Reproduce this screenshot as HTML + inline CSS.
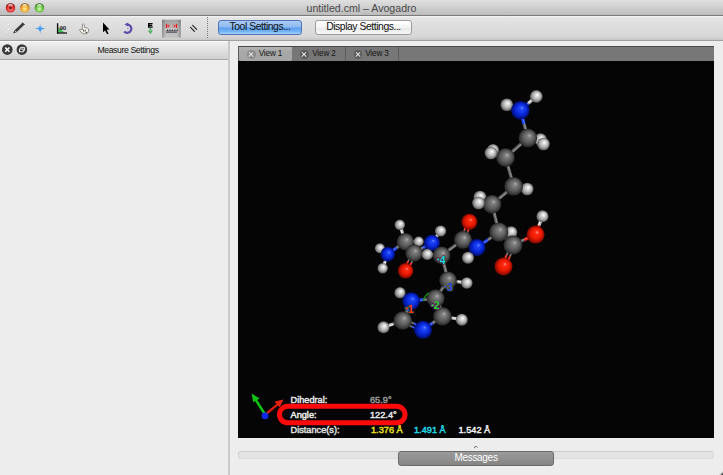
<!DOCTYPE html>
<html><head><meta charset="utf-8">
<style>
*{margin:0;padding:0;box-sizing:border-box}
html,body{width:723px;height:475px;overflow:hidden;background:#ededed;font-family:"Liberation Sans",sans-serif;position:relative}
.abs{position:absolute}
#title{left:0;top:0;width:723px;height:16px;background:linear-gradient(#e0e0e0,#bcbcbc);border-bottom:1px solid #7a7a7a}
#title .t{left:0;width:723px;top:2px;text-align:center;font-size:10.6px;color:#484848;line-height:12px}
.light{width:9.6px;height:9.6px;border-radius:50%;top:3px}
#toolbar{left:0;top:16px;width:723px;height:25px;background:linear-gradient(#f4f4f4 0px,#e4e4e4 2px,#d6d6d6 21px,#c6c6c6);border-bottom:1px solid #a0a0a0}
.btn{height:15px;border-radius:3px;font-size:10.4px;letter-spacing:-0.45px;line-height:12px;text-align:center;color:#111}
#b1{left:218px;top:20px;width:84px;background:linear-gradient(#a9cbf3 0%,#8dbaf0 46%,#5b9fee 54%,#74b2f4 80%,#a4d4fc 100%);border:1px solid #5474b8}
#b2{left:315px;top:20px;width:97px;background:linear-gradient(#ffffff,#f3f3f3 50%,#e9e9e9 51%,#f6f6f6);border:1px solid #9c9c9c}
#lhead{left:0;top:41px;width:228px;height:19px;background:linear-gradient(#f0f0f0,#d0d0d0);border-top:1px solid #fafafa;border-bottom:1px solid #a8a8a8}
#lhead .t{left:0;width:256px;top:3.3px;text-align:center;font-size:8.7px;letter-spacing:-0.4px;color:#111;line-height:10px}
#divider{left:228px;top:41px;width:2px;height:434px;background:#c9c9c9}
#tabbar{left:238px;top:46px;width:476px;height:15px;background:#777;border-top:1px solid #4a4a4a;border-left:1px solid #5a5a5a}
.tab{top:0;height:14px}
#tabbar .x{top:3.3px;width:8.6px;height:8.6px;border-radius:50%}
#tabbar .x:before,#tabbar .x:after{content:"";position:absolute;left:1.3px;top:3.6px;width:6px;height:1.4px;background:#e4e4e4;transform:rotate(45deg)}
#tabbar .x:after{transform:rotate(-45deg)}
#tabbar .tt{top:2px;font-size:8.2px;letter-spacing:-0.15px;line-height:10px;color:#151515}
#view{left:238px;top:61px;width:476px;height:377px;background:#050505;overflow:hidden}
#bbar{left:238px;top:451px;width:476px;height:8px;background:#e4e4e4;border:1px solid #dadada;border-top-color:#cecece;border-left-color:#d0d0d0;border-radius:3px}
#msg{left:398px;top:451px;width:156px;height:15px;border-radius:3px;background:linear-gradient(#9a9a9a,#858585);border:1px solid #6a6a6a;color:#fff;font-size:10px;letter-spacing:-0.3px;text-align:center;line-height:12px}
</style></head><body>
<div id="title" class="abs">
  <div class="abs t">untitled.cml – Avogadro</div>
  <svg class="abs" style="left:0;top:0" width="50" height="16"><defs><radialGradient id="lr" cx="0.5" cy="0.62" r="0.55"><stop offset="0" stop-color="#ff9a9a"/><stop offset="0.45" stop-color="#f04a4a"/><stop offset="0.85" stop-color="#c82020"/><stop offset="1" stop-color="#7a1010"/></radialGradient><radialGradient id="ly" cx="0.5" cy="0.62" r="0.55"><stop offset="0" stop-color="#ffe8a0"/><stop offset="0.45" stop-color="#f8c048"/><stop offset="0.85" stop-color="#d89020"/><stop offset="1" stop-color="#805010"/></radialGradient><radialGradient id="lg" cx="0.5" cy="0.62" r="0.55"><stop offset="0" stop-color="#d8f8b8"/><stop offset="0.45" stop-color="#8ad860"/><stop offset="0.85" stop-color="#50a830"/><stop offset="1" stop-color="#2a6a18"/></radialGradient><linearGradient id="lhi" x1="0" y1="0" x2="0" y2="1"><stop offset="0" stop-color="#fff" stop-opacity="0.9"/><stop offset="1" stop-color="#fff" stop-opacity="0"/></linearGradient></defs><circle cx="10.5" cy="7.9" r="4.7" fill="url(#lr)"/><ellipse cx="10.5" cy="5.6" rx="2.6" ry="1.7" fill="url(#lhi)"/><circle cx="24.8" cy="7.9" r="4.7" fill="url(#ly)"/><ellipse cx="24.8" cy="5.6" rx="2.6" ry="1.7" fill="url(#lhi)"/><circle cx="39.4" cy="7.9" r="4.7" fill="url(#lg)"/><ellipse cx="39.4" cy="5.6" rx="2.6" ry="1.7" fill="url(#lhi)"/><circle cx="10.5" cy="8" r="1.4" fill="#6a0000" opacity="0.85"/></svg>
</div>
<div id="toolbar" class="abs"></div>
<svg width="723" height="60" viewBox="0 0 723 60" style="position:absolute;left:0;top:0;z-index:5"><defs><linearGradient id="press" x1="0" y1="0" x2="0" y2="1"><stop offset="0" stop-color="#a9a9a9"/><stop offset="0.5" stop-color="#c4c4c4"/><stop offset="1" stop-color="#cdcdcd"/></linearGradient><linearGradient id="star" x1="0" y1="0" x2="0" y2="1"><stop offset="0" stop-color="#7cc4ff"/><stop offset="1" stop-color="#1a7ae8"/></linearGradient></defs><circle cx="6.5" cy="22.2" r="0.85" fill="#c0c0c0"/><circle cx="6.2" cy="21.8" r="0.8" fill="#ffffff"/><circle cx="8.7" cy="24.8" r="0.85" fill="#c0c0c0"/><circle cx="8.4" cy="24.4" r="0.8" fill="#ffffff"/><circle cx="6.5" cy="27.4" r="0.85" fill="#c0c0c0"/><circle cx="6.2" cy="27.0" r="0.8" fill="#ffffff"/><circle cx="8.7" cy="30.0" r="0.85" fill="#c0c0c0"/><circle cx="8.4" cy="29.6" r="0.8" fill="#ffffff"/><circle cx="6.5" cy="32.6" r="0.85" fill="#c0c0c0"/><circle cx="6.2" cy="32.2" r="0.8" fill="#ffffff"/><line x1="15.6" y1="31.2" x2="23.4" y2="23.8" stroke="#3a3a3a" stroke-width="2.7" stroke-linecap="butt"/><line x1="22.2" y1="22.6" x2="24.6" y2="25" stroke="#222" stroke-width="1"/><polygon points="13,33.6 14.6,30 16.8,32.2" fill="#404040"/><line x1="14.9" y1="30.7" x2="16.6" y2="32.4" stroke="#e0e0e0" stroke-width="0.9"/><path d="M40.2 22.8 C40.4 26.6 40.8 27.9 45.9 28.5 C40.8 29.1 40.4 30.4 40.2 34.2 C40 30.4 39.6 29.1 34.5 28.5 C39.6 27.9 40 26.6 40.2 22.8Z" fill="url(#star)"/><polygon points="58.3,27.3 58.3,32.4 64.5,32.4" fill="#3cc050"/><line x1="57.6" y1="23.2" x2="57.6" y2="33.6" stroke="#111" stroke-width="1.4"/><line x1="57" y1="33" x2="67" y2="33" stroke="#111" stroke-width="1.3"/><text x="59.6" y="30.4" font-size="6.2" font-weight="bold" fill="#222" font-family="Liberation Sans" letter-spacing="-0.3">90</text><path d="M82.4 24.4 Q83.3 23.2 84.2 24.4 L84.6 27.6 Q87.6 27.4 88.6 29 Q89 31.6 87.6 33.2 Q85.6 34.2 83 33.6 Q81 32.6 79.8 30.6 Q79.4 29.4 80.6 29.2 L82.4 29.8 Z" fill="#f2f2ea" stroke="#6a6a60" stroke-width="0.7"/><line x1="83.6" y1="29.6" x2="83.6" y2="31.6" stroke="#333" stroke-width="0.8"/><line x1="85.2" y1="29.6" x2="85.2" y2="31.6" stroke="#333" stroke-width="0.8"/><circle cx="86.3" cy="32.4" r="0.6" fill="#111"/><path d="M103 22.6 L103 32.2 L105 30.4 L107.2 34.3 L108.6 33.5 L106.6 29.8 L109.4 29.4 Z" fill="#000"/><path d="M126.8 24.6 A4.1 4.1 0 1 1 124.2 31.4" fill="none" stroke="#5d4aab" stroke-width="2.2"/><polygon points="124.4,24.2 128.4,22.4 127.8,26.6" fill="#5d4aab"/><circle cx="127.9" cy="28.4" r="0.75" fill="#9080d0"/><path d="M148 23 H152.6 V24.2 H149.4 V24.8 H152.2 V25.9 H149.4 V26.5 H152.7 V27.7 H148 Z" fill="#000"/><rect x="149.5" y="28.4" width="1.8" height="2.4" fill="#3aa855"/><polygon points="147.9,30.4 152.9,30.4 150.4,34" fill="#3aa855"/><circle cx="150.4" cy="30.8" r="0.7" fill="#a0e8b0"/><defs><linearGradient id="pressh" x1="0" y1="0" x2="1" y2="0"><stop offset="0" stop-color="#000" stop-opacity="0.28"/><stop offset="0.2" stop-color="#000" stop-opacity="0.05"/><stop offset="0.8" stop-color="#000" stop-opacity="0.05"/><stop offset="1" stop-color="#000" stop-opacity="0.28"/></linearGradient></defs><rect x="162" y="19.7" width="18.8" height="18" fill="url(#press)"/><rect x="162" y="19.7" width="18.8" height="18" fill="url(#pressh)"/><rect x="165.9" y="23.9" width="1.2" height="4.3" fill="#ee1c1c"/><rect x="175.9" y="23.9" width="1.2" height="4.3" fill="#ee1c1c"/><polygon points="167,26 169.2,24.3 169.2,27.7" fill="#ee3030"/><polygon points="175.9,26 173.7,24.3 173.7,27.7" fill="#ee3030"/><line x1="169.2" y1="26" x2="173.7" y2="26" stroke="#f09090" stroke-width="0.9" stroke-dasharray="1,0.8"/><rect x="166" y="29.4" width="11" height="3.6" fill="#8a8a8e"/><rect x="166" y="31.9" width="11" height="1.1" fill="#6c6c74"/><rect x="166.0" y="28.6" width="1.1" height="1.3" fill="#f4f4f4"/><rect x="167.1" y="29.5" width="1.0" height="1.6" fill="#3a3a3a"/><rect x="168.4" y="28.6" width="1.1" height="1.3" fill="#f4f4f4"/><rect x="169.5" y="29.5" width="1.0" height="1.6" fill="#3a3a3a"/><rect x="170.8" y="28.6" width="1.1" height="1.3" fill="#f4f4f4"/><rect x="171.9" y="29.5" width="1.0" height="1.6" fill="#3a3a3a"/><rect x="173.2" y="28.6" width="1.1" height="1.3" fill="#f4f4f4"/><rect x="174.3" y="29.5" width="1.0" height="1.6" fill="#3a3a3a"/><rect x="175.6" y="28.6" width="1.1" height="1.3" fill="#f4f4f4"/><rect x="176.7" y="29.5" width="1.0" height="1.6" fill="#3a3a3a"/><line x1="190.6" y1="27.4" x2="194.4" y2="31.4" stroke="#2a2a2a" stroke-width="1.2" stroke-linecap="round"/><line x1="192.7" y1="25.3" x2="196.6" y2="29.3" stroke="#2a2a2a" stroke-width="1.2" stroke-linecap="round"/><rect x="207" y="17.0" width="1" height="1" fill="#7a7a7a"/><rect x="207" y="19.0" width="1" height="1" fill="#7a7a7a"/><rect x="207" y="21.0" width="1" height="1" fill="#7a7a7a"/><rect x="207" y="23.0" width="1" height="1" fill="#7a7a7a"/><rect x="207" y="25.0" width="1" height="1" fill="#7a7a7a"/><rect x="207" y="27.0" width="1" height="1" fill="#7a7a7a"/><rect x="207" y="29.0" width="1" height="1" fill="#7a7a7a"/><rect x="207" y="31.0" width="1" height="1" fill="#7a7a7a"/><rect x="207" y="33.0" width="1" height="1" fill="#7a7a7a"/><rect x="207" y="35.0" width="1" height="1" fill="#7a7a7a"/><rect x="207" y="37.0" width="1" height="1" fill="#7a7a7a"/><circle cx="7.3" cy="49.6" r="5.3" fill="#3a3a3a"/><path d="M5.2 47.5 L9.4 51.7 M9.4 47.5 L5.2 51.7" stroke="#fff" stroke-width="1.6"/><circle cx="21.9" cy="49.6" r="5.3" fill="#3a3a3a"/><rect x="19.4" y="49" width="3.8" height="2.8" fill="none" stroke="#fff" stroke-width="0.9"/><path d="M20.6 48.4 V47.4 H24.6 V50.4 H23.6" fill="none" stroke="#fff" stroke-width="0.9"/></svg>
<div id="b1" class="abs btn">Tool Settings...</div>
<div id="b2" class="abs btn">Display Settings...</div>
<div id="lhead" class="abs"><div class="abs t">Measure Settings</div></div>
<div id="divider" class="abs"></div>
<div id="tabbar" class="abs">
  <div class="abs tab" style="left:0;width:52.5px;background:linear-gradient(#b4b4b4,#a8a8a8 30%,#a6a6a6);border-radius:0 0 2px 2px;height:14px"></div>
  <div class="abs" style="left:106px;top:0;width:1px;height:14px;background:#5e5e5e"></div>
  <div class="abs" style="left:159px;top:0;width:1px;height:14px;background:#5e5e5e"></div>
  <div class="abs x" style="left:8.2px;background:#8c8c8c"></div><div class="abs tt" style="left:19.7px">View 1</div>
  <div class="abs x" style="left:61.2px;background:#5c5c5c"></div><div class="abs tt" style="left:73.2px">View 2</div>
  <div class="abs x" style="left:114.7px;background:#5c5c5c"></div><div class="abs tt" style="left:126.2px">View 3</div>
</div>
<div id="view" class="abs"><svg width="476" height="377" viewBox="238 61 476 377" style="position:absolute;left:0;top:0"><defs><radialGradient id="gC" cx="0.5" cy="0.5" r="0.5" fx="0.6" fy="0.36"><stop offset="0" stop-color="#b0b0b0"/><stop offset="0.22" stop-color="#7e7e7e"/><stop offset="0.65" stop-color="#575757"/><stop offset="1" stop-color="#262626"/></radialGradient><radialGradient id="gN" cx="0.5" cy="0.5" r="0.5" fx="0.6" fy="0.36"><stop offset="0" stop-color="#7890ff"/><stop offset="0.18" stop-color="#2048ff"/><stop offset="0.6" stop-color="#0828d8"/><stop offset="1" stop-color="#000c70"/></radialGradient><radialGradient id="gO" cx="0.5" cy="0.5" r="0.5" fx="0.6" fy="0.36"><stop offset="0" stop-color="#ffa090"/><stop offset="0.2" stop-color="#ff2a14"/><stop offset="0.62" stop-color="#e81800"/><stop offset="1" stop-color="#780800"/></radialGradient><radialGradient id="gH" cx="0.5" cy="0.5" r="0.5" fx="0.6" fy="0.36"><stop offset="0" stop-color="#ffffff"/><stop offset="0.22" stop-color="#e4e4e4"/><stop offset="0.62" stop-color="#b0b0b0"/><stop offset="1" stop-color="#5a5a5a"/></radialGradient></defs><line x1="520.4" y1="110.3" x2="528.3" y2="103.3" stroke="#1a40f0" stroke-width="3.2"/><line x1="528.3" y1="103.3" x2="536.3" y2="96.4" stroke="#b8b8b8" stroke-width="3.2"/><line x1="520.1" y1="110.0" x2="528.1" y2="103.1" stroke="#5070ff" stroke-width="1.12"/><line x1="528.1" y1="103.1" x2="536.0" y2="96.1" stroke="#eeeeee" stroke-width="1.12"/><line x1="520.4" y1="110.3" x2="513.6" y2="107.5" stroke="#1a40f0" stroke-width="3.2"/><line x1="513.6" y1="107.5" x2="506.8" y2="104.8" stroke="#b8b8b8" stroke-width="3.2"/><line x1="520.3" y1="110.7" x2="513.5" y2="107.9" stroke="#5070ff" stroke-width="1.12"/><line x1="513.5" y1="107.9" x2="506.7" y2="105.2" stroke="#eeeeee" stroke-width="1.12"/><line x1="505.5" y1="157.5" x2="499.2" y2="153.8" stroke="#606060" stroke-width="3.2"/><line x1="499.2" y1="153.8" x2="493.0" y2="150.0" stroke="#b8b8b8" stroke-width="3.2"/><line x1="505.3" y1="157.8" x2="499.1" y2="154.1" stroke="#8e8e8e" stroke-width="1.12"/><line x1="499.1" y1="154.1" x2="492.8" y2="150.3" stroke="#eeeeee" stroke-width="1.12"/><line x1="405.4" y1="241.7" x2="402.6" y2="233.2" stroke="#606060" stroke-width="3.2"/><line x1="402.6" y1="233.2" x2="399.8" y2="224.8" stroke="#b8b8b8" stroke-width="3.2"/><line x1="405.0" y1="241.8" x2="402.2" y2="233.4" stroke="#8e8e8e" stroke-width="1.12"/><line x1="402.2" y1="233.4" x2="399.4" y2="224.9" stroke="#eeeeee" stroke-width="1.12"/><circle cx="536.3" cy="96.4" r="6.3" fill="url(#gH)"/><circle cx="506.8" cy="104.8" r="6.3" fill="url(#gH)"/><circle cx="493" cy="150" r="6" fill="url(#gH)"/><circle cx="399.8" cy="224.8" r="5.2" fill="url(#gH)"/><line x1="527.9" y1="137.9" x2="534.2" y2="138.7" stroke="#606060" stroke-width="3.2"/><line x1="534.2" y1="138.7" x2="540.5" y2="139.5" stroke="#b8b8b8" stroke-width="3.2"/><line x1="527.9" y1="137.5" x2="534.2" y2="138.3" stroke="#8e8e8e" stroke-width="1.12"/><line x1="534.2" y1="138.3" x2="540.5" y2="139.1" stroke="#eeeeee" stroke-width="1.12"/><line x1="505.5" y1="157.5" x2="498.2" y2="155.2" stroke="#606060" stroke-width="3.2"/><line x1="498.2" y1="155.2" x2="491.0" y2="153.0" stroke="#b8b8b8" stroke-width="3.2"/><line x1="505.4" y1="157.9" x2="498.1" y2="155.6" stroke="#8e8e8e" stroke-width="1.12"/><line x1="498.1" y1="155.6" x2="490.9" y2="153.4" stroke="#eeeeee" stroke-width="1.12"/><line x1="513.7" y1="186.3" x2="520.5" y2="187.7" stroke="#606060" stroke-width="3.2"/><line x1="520.5" y1="187.7" x2="527.2" y2="189.0" stroke="#b8b8b8" stroke-width="3.2"/><line x1="513.8" y1="185.9" x2="520.5" y2="187.3" stroke="#8e8e8e" stroke-width="1.12"/><line x1="520.5" y1="187.3" x2="527.3" y2="188.6" stroke="#eeeeee" stroke-width="1.12"/><line x1="492.0" y1="204.2" x2="486.0" y2="200.6" stroke="#606060" stroke-width="3.2"/><line x1="486.0" y1="200.6" x2="480.0" y2="197.0" stroke="#b8b8b8" stroke-width="3.2"/><line x1="491.8" y1="204.5" x2="485.8" y2="200.9" stroke="#8e8e8e" stroke-width="1.12"/><line x1="485.8" y1="200.9" x2="479.8" y2="197.3" stroke="#eeeeee" stroke-width="1.12"/><line x1="498.8" y1="232.0" x2="505.1" y2="232.1" stroke="#606060" stroke-width="3.2"/><line x1="505.1" y1="232.1" x2="511.3" y2="232.2" stroke="#b8b8b8" stroke-width="3.2"/><line x1="498.8" y1="231.6" x2="505.1" y2="231.7" stroke="#8e8e8e" stroke-width="1.12"/><line x1="505.1" y1="231.7" x2="511.3" y2="231.8" stroke="#eeeeee" stroke-width="1.12"/><line x1="461.3" y1="239.2" x2="464.5" y2="230.2" stroke="#606060" stroke-width="2.0"/><line x1="464.5" y1="230.2" x2="467.7" y2="221.2" stroke="#e82010" stroke-width="2.0"/><line x1="461.1" y1="239.1" x2="464.3" y2="230.1" stroke="#8e8e8e" stroke-width="0.70"/><line x1="464.3" y1="230.1" x2="467.5" y2="221.1" stroke="#ff6050" stroke-width="0.70"/><line x1="464.7" y1="240.4" x2="467.9" y2="231.4" stroke="#606060" stroke-width="2.0"/><line x1="467.9" y1="231.4" x2="471.1" y2="222.4" stroke="#e82010" stroke-width="2.0"/><line x1="464.5" y1="240.3" x2="467.7" y2="231.3" stroke="#8e8e8e" stroke-width="0.70"/><line x1="467.7" y1="231.3" x2="470.9" y2="222.3" stroke="#ff6050" stroke-width="0.70"/><line x1="431.9" y1="242.8" x2="436.2" y2="236.9" stroke="#1a40f0" stroke-width="3.2"/><line x1="436.2" y1="236.9" x2="440.6" y2="231.0" stroke="#b8b8b8" stroke-width="3.2"/><line x1="431.6" y1="242.6" x2="435.9" y2="236.7" stroke="#5070ff" stroke-width="1.12"/><line x1="435.9" y1="236.7" x2="440.3" y2="230.8" stroke="#eeeeee" stroke-width="1.12"/><line x1="387.8" y1="254.2" x2="396.6" y2="247.9" stroke="#1a40f0" stroke-width="3.2"/><line x1="396.6" y1="247.9" x2="405.4" y2="241.7" stroke="#606060" stroke-width="3.2"/><line x1="387.6" y1="253.9" x2="396.4" y2="247.6" stroke="#5070ff" stroke-width="1.12"/><line x1="396.4" y1="247.6" x2="405.2" y2="241.4" stroke="#8e8e8e" stroke-width="1.12"/><line x1="387.8" y1="254.2" x2="383.9" y2="251.2" stroke="#1a40f0" stroke-width="3.2"/><line x1="383.9" y1="251.2" x2="379.9" y2="248.3" stroke="#b8b8b8" stroke-width="3.2"/><line x1="387.6" y1="254.5" x2="383.6" y2="251.6" stroke="#5070ff" stroke-width="1.12"/><line x1="383.6" y1="251.6" x2="379.7" y2="248.6" stroke="#eeeeee" stroke-width="1.12"/><line x1="387.8" y1="254.2" x2="385.2" y2="261.2" stroke="#1a40f0" stroke-width="3.2"/><line x1="385.2" y1="261.2" x2="382.7" y2="268.2" stroke="#b8b8b8" stroke-width="3.2"/><line x1="388.2" y1="254.3" x2="385.6" y2="261.3" stroke="#5070ff" stroke-width="1.12"/><line x1="385.6" y1="261.3" x2="383.1" y2="268.3" stroke="#eeeeee" stroke-width="1.12"/><line x1="405.4" y1="241.7" x2="412.0" y2="241.6" stroke="#606060" stroke-width="3.2"/><line x1="412.0" y1="241.6" x2="418.7" y2="241.5" stroke="#b8b8b8" stroke-width="3.2"/><line x1="405.4" y1="241.3" x2="412.0" y2="241.2" stroke="#8e8e8e" stroke-width="1.12"/><line x1="412.0" y1="241.2" x2="418.7" y2="241.1" stroke="#eeeeee" stroke-width="1.12"/><line x1="405.4" y1="241.7" x2="409.7" y2="247.3" stroke="#606060" stroke-width="3.2"/><line x1="409.7" y1="247.3" x2="414.0" y2="253.0" stroke="#606060" stroke-width="3.2"/><line x1="405.7" y1="241.5" x2="410.0" y2="247.1" stroke="#8e8e8e" stroke-width="1.12"/><line x1="410.0" y1="247.1" x2="414.3" y2="252.8" stroke="#8e8e8e" stroke-width="1.12"/><circle cx="540.5" cy="139.5" r="6.3" fill="url(#gH)"/><circle cx="491" cy="153" r="6.3" fill="url(#gH)"/><circle cx="527.2" cy="189" r="6.3" fill="url(#gH)"/><circle cx="480" cy="197" r="6.3" fill="url(#gH)"/><circle cx="511.3" cy="232.2" r="6" fill="url(#gH)"/><circle cx="469.4" cy="221.8" r="8" fill="url(#gO)"/><circle cx="440.6" cy="231" r="5.6" fill="url(#gH)"/><circle cx="405.4" cy="241.7" r="8.6" fill="url(#gC)"/><circle cx="379.9" cy="248.3" r="5" fill="url(#gH)"/><circle cx="382.7" cy="268.2" r="5.2" fill="url(#gH)"/><line x1="520.4" y1="110.3" x2="524.1" y2="124.1" stroke="#1a40f0" stroke-width="3.2"/><line x1="524.1" y1="124.1" x2="527.9" y2="137.9" stroke="#606060" stroke-width="3.2"/><line x1="520.8" y1="110.2" x2="524.5" y2="124.0" stroke="#5070ff" stroke-width="1.12"/><line x1="524.5" y1="124.0" x2="528.3" y2="137.8" stroke="#8e8e8e" stroke-width="1.12"/><line x1="527.9" y1="137.9" x2="535.7" y2="140.9" stroke="#606060" stroke-width="3.2"/><line x1="535.7" y1="140.9" x2="543.5" y2="144.0" stroke="#b8b8b8" stroke-width="3.2"/><line x1="528.0" y1="137.5" x2="535.8" y2="140.6" stroke="#8e8e8e" stroke-width="1.12"/><line x1="535.8" y1="140.6" x2="543.6" y2="143.6" stroke="#eeeeee" stroke-width="1.12"/><line x1="527.9" y1="137.9" x2="516.7" y2="147.7" stroke="#606060" stroke-width="3.2"/><line x1="516.7" y1="147.7" x2="505.5" y2="157.5" stroke="#606060" stroke-width="3.2"/><line x1="528.2" y1="138.2" x2="517.0" y2="148.0" stroke="#8e8e8e" stroke-width="1.12"/><line x1="517.0" y1="148.0" x2="505.8" y2="157.8" stroke="#8e8e8e" stroke-width="1.12"/><line x1="505.5" y1="157.5" x2="509.6" y2="171.9" stroke="#606060" stroke-width="3.2"/><line x1="509.6" y1="171.9" x2="513.7" y2="186.3" stroke="#606060" stroke-width="3.2"/><line x1="505.9" y1="157.4" x2="510.0" y2="171.8" stroke="#8e8e8e" stroke-width="1.12"/><line x1="510.0" y1="171.8" x2="514.1" y2="186.2" stroke="#8e8e8e" stroke-width="1.12"/><line x1="513.7" y1="186.3" x2="502.9" y2="195.2" stroke="#606060" stroke-width="3.2"/><line x1="502.9" y1="195.2" x2="492.0" y2="204.2" stroke="#606060" stroke-width="3.2"/><line x1="513.9" y1="186.6" x2="503.1" y2="195.5" stroke="#8e8e8e" stroke-width="1.12"/><line x1="503.1" y1="195.5" x2="492.2" y2="204.5" stroke="#8e8e8e" stroke-width="1.12"/><line x1="492.0" y1="204.2" x2="485.2" y2="203.6" stroke="#606060" stroke-width="3.2"/><line x1="485.2" y1="203.6" x2="478.5" y2="203.0" stroke="#b8b8b8" stroke-width="3.2"/><line x1="492.0" y1="204.6" x2="485.2" y2="204.0" stroke="#8e8e8e" stroke-width="1.12"/><line x1="485.2" y1="204.0" x2="478.5" y2="203.4" stroke="#eeeeee" stroke-width="1.12"/><line x1="492.0" y1="204.2" x2="495.4" y2="218.1" stroke="#606060" stroke-width="3.2"/><line x1="495.4" y1="218.1" x2="498.8" y2="232.0" stroke="#606060" stroke-width="3.2"/><line x1="492.4" y1="204.1" x2="495.8" y2="218.0" stroke="#8e8e8e" stroke-width="1.12"/><line x1="495.8" y1="218.0" x2="499.2" y2="231.9" stroke="#8e8e8e" stroke-width="1.12"/><line x1="498.8" y1="232.0" x2="505.9" y2="238.5" stroke="#606060" stroke-width="3.2"/><line x1="505.9" y1="238.5" x2="513.0" y2="245.0" stroke="#606060" stroke-width="3.2"/><line x1="499.1" y1="231.7" x2="506.2" y2="238.2" stroke="#8e8e8e" stroke-width="1.12"/><line x1="506.2" y1="238.2" x2="513.3" y2="244.7" stroke="#8e8e8e" stroke-width="1.12"/><line x1="535.6" y1="234.6" x2="539.0" y2="225.4" stroke="#e82010" stroke-width="3.2"/><line x1="539.0" y1="225.4" x2="542.5" y2="216.2" stroke="#b8b8b8" stroke-width="3.2"/><line x1="535.2" y1="234.5" x2="538.7" y2="225.3" stroke="#ff6050" stroke-width="1.12"/><line x1="538.7" y1="225.3" x2="542.1" y2="216.1" stroke="#eeeeee" stroke-width="1.12"/><line x1="498.8" y1="232.0" x2="487.9" y2="239.7" stroke="#606060" stroke-width="3.2"/><line x1="487.9" y1="239.7" x2="477.0" y2="247.4" stroke="#1a40f0" stroke-width="3.2"/><line x1="499.0" y1="232.3" x2="488.1" y2="240.0" stroke="#8e8e8e" stroke-width="1.12"/><line x1="488.1" y1="240.0" x2="477.2" y2="247.7" stroke="#5070ff" stroke-width="1.12"/><line x1="477.0" y1="247.4" x2="470.0" y2="243.6" stroke="#1a40f0" stroke-width="3.2"/><line x1="470.0" y1="243.6" x2="463.0" y2="239.8" stroke="#606060" stroke-width="3.2"/><line x1="476.8" y1="247.7" x2="469.8" y2="243.9" stroke="#5070ff" stroke-width="1.12"/><line x1="469.8" y1="243.9" x2="462.8" y2="240.1" stroke="#8e8e8e" stroke-width="1.12"/><line x1="463.0" y1="239.8" x2="452.3" y2="247.5" stroke="#606060" stroke-width="3.2"/><line x1="452.3" y1="247.5" x2="441.6" y2="255.2" stroke="#606060" stroke-width="3.2"/><line x1="463.2" y1="240.1" x2="452.5" y2="247.8" stroke="#8e8e8e" stroke-width="1.12"/><line x1="452.5" y1="247.8" x2="441.8" y2="255.5" stroke="#8e8e8e" stroke-width="1.12"/><line x1="441.6" y1="255.2" x2="436.8" y2="249.0" stroke="#606060" stroke-width="3.2"/><line x1="436.8" y1="249.0" x2="431.9" y2="242.8" stroke="#1a40f0" stroke-width="3.2"/><line x1="441.3" y1="255.4" x2="436.4" y2="249.2" stroke="#8e8e8e" stroke-width="1.12"/><line x1="436.4" y1="249.2" x2="431.6" y2="243.0" stroke="#5070ff" stroke-width="1.12"/><line x1="448.0" y1="280.2" x2="457.4" y2="281.6" stroke="#606060" stroke-width="3.2"/><line x1="457.4" y1="281.6" x2="466.8" y2="283.0" stroke="#b8b8b8" stroke-width="3.2"/><line x1="448.1" y1="279.8" x2="457.5" y2="281.2" stroke="#8e8e8e" stroke-width="1.12"/><line x1="457.5" y1="281.2" x2="466.9" y2="282.6" stroke="#eeeeee" stroke-width="1.12"/><line x1="411.2" y1="301.0" x2="405.6" y2="296.9" stroke="#1a40f0" stroke-width="3.2"/><line x1="405.6" y1="296.9" x2="400.0" y2="292.7" stroke="#b8b8b8" stroke-width="3.2"/><line x1="411.0" y1="301.3" x2="405.4" y2="297.2" stroke="#5070ff" stroke-width="1.12"/><line x1="405.4" y1="297.2" x2="399.8" y2="293.0" stroke="#eeeeee" stroke-width="1.12"/><line x1="442.4" y1="316.3" x2="452.1" y2="318.0" stroke="#606060" stroke-width="3.2"/><line x1="452.1" y1="318.0" x2="461.8" y2="319.7" stroke="#b8b8b8" stroke-width="3.2"/><line x1="442.5" y1="315.9" x2="452.2" y2="317.6" stroke="#8e8e8e" stroke-width="1.12"/><line x1="452.2" y1="317.6" x2="461.9" y2="319.3" stroke="#eeeeee" stroke-width="1.12"/><line x1="402.8" y1="320.5" x2="393.1" y2="323.9" stroke="#606060" stroke-width="3.2"/><line x1="393.1" y1="323.9" x2="383.5" y2="327.3" stroke="#b8b8b8" stroke-width="3.2"/><line x1="402.9" y1="320.9" x2="393.3" y2="324.3" stroke="#8e8e8e" stroke-width="1.12"/><line x1="393.3" y1="324.3" x2="383.6" y2="327.7" stroke="#eeeeee" stroke-width="1.12"/><line x1="415.6" y1="253.8" x2="411.4" y2="262.7" stroke="#606060" stroke-width="2.0"/><line x1="411.4" y1="262.7" x2="407.2" y2="271.6" stroke="#e82010" stroke-width="2.0"/><line x1="415.8" y1="253.9" x2="411.6" y2="262.8" stroke="#8e8e8e" stroke-width="0.70"/><line x1="411.6" y1="262.8" x2="407.4" y2="271.7" stroke="#ff6050" stroke-width="0.70"/><line x1="412.4" y1="252.2" x2="408.2" y2="261.1" stroke="#606060" stroke-width="2.0"/><line x1="408.2" y1="261.1" x2="404.0" y2="270.0" stroke="#e82010" stroke-width="2.0"/><line x1="412.6" y1="252.3" x2="408.4" y2="261.2" stroke="#8e8e8e" stroke-width="0.70"/><line x1="408.4" y1="261.2" x2="404.2" y2="270.1" stroke="#ff6050" stroke-width="0.70"/><line x1="414.0" y1="253.0" x2="422.9" y2="247.9" stroke="#606060" stroke-width="3.2"/><line x1="422.9" y1="247.9" x2="431.9" y2="242.8" stroke="#1a40f0" stroke-width="3.2"/><line x1="413.8" y1="252.7" x2="422.8" y2="247.6" stroke="#8e8e8e" stroke-width="1.12"/><line x1="422.8" y1="247.6" x2="431.7" y2="242.5" stroke="#5070ff" stroke-width="1.12"/><circle cx="418.7" cy="241.5" r="5.1" fill="url(#gH)"/><line x1="441.6" y1="255.2" x2="434.5" y2="254.8" stroke="#606060" stroke-width="3.2"/><line x1="434.5" y1="254.8" x2="427.3" y2="254.4" stroke="#b8b8b8" stroke-width="3.2"/><line x1="441.6" y1="255.6" x2="434.4" y2="255.2" stroke="#8e8e8e" stroke-width="1.12"/><line x1="434.4" y1="255.2" x2="427.3" y2="254.8" stroke="#eeeeee" stroke-width="1.12"/><circle cx="520.4" cy="110.3" r="9.2" fill="url(#gN)"/><circle cx="527.9" cy="137.9" r="9.3" fill="url(#gC)"/><circle cx="505.5" cy="157.5" r="9.3" fill="url(#gC)"/><circle cx="513.7" cy="186.3" r="9.3" fill="url(#gC)"/><circle cx="492" cy="204.2" r="9.3" fill="url(#gC)"/><circle cx="498.8" cy="232" r="9.5" fill="url(#gC)"/><circle cx="542.5" cy="216.2" r="6" fill="url(#gH)"/><circle cx="463" cy="239.8" r="9" fill="url(#gC)"/><circle cx="431.9" cy="242.8" r="8" fill="url(#gN)"/><circle cx="466.8" cy="283" r="5.8" fill="url(#gH)"/><circle cx="400" cy="292.7" r="5.6" fill="url(#gH)"/><circle cx="461.8" cy="319.7" r="6" fill="url(#gH)"/><circle cx="383.5" cy="327.3" r="6" fill="url(#gH)"/><circle cx="387.8" cy="254.2" r="7.2" fill="url(#gN)"/><circle cx="414" cy="253" r="8.6" fill="url(#gC)"/><line x1="514.6" y1="245.7" x2="509.9" y2="256.4" stroke="#606060" stroke-width="2.0"/><line x1="509.9" y1="256.4" x2="505.1" y2="267.1" stroke="#e82010" stroke-width="2.0"/><line x1="514.9" y1="245.8" x2="510.1" y2="256.5" stroke="#8e8e8e" stroke-width="0.70"/><line x1="510.1" y1="256.5" x2="505.4" y2="267.2" stroke="#ff6050" stroke-width="0.70"/><line x1="511.4" y1="244.3" x2="506.6" y2="255.0" stroke="#606060" stroke-width="2.0"/><line x1="506.6" y1="255.0" x2="501.9" y2="265.7" stroke="#e82010" stroke-width="2.0"/><line x1="511.6" y1="244.4" x2="506.8" y2="255.1" stroke="#8e8e8e" stroke-width="0.70"/><line x1="506.8" y1="255.1" x2="502.1" y2="265.8" stroke="#ff6050" stroke-width="0.70"/><line x1="513.0" y1="245.0" x2="524.3" y2="239.8" stroke="#606060" stroke-width="3.2"/><line x1="524.3" y1="239.8" x2="535.6" y2="234.6" stroke="#e82010" stroke-width="3.2"/><line x1="512.8" y1="244.7" x2="524.1" y2="239.5" stroke="#8e8e8e" stroke-width="1.12"/><line x1="524.1" y1="239.5" x2="535.4" y2="234.3" stroke="#ff6050" stroke-width="1.12"/><line x1="477.0" y1="247.4" x2="472.5" y2="252.6" stroke="#1a40f0" stroke-width="3.2"/><line x1="472.5" y1="252.6" x2="468.0" y2="257.8" stroke="#b8b8b8" stroke-width="3.2"/><line x1="477.3" y1="247.7" x2="472.8" y2="252.9" stroke="#5070ff" stroke-width="1.12"/><line x1="472.8" y1="252.9" x2="468.3" y2="258.1" stroke="#eeeeee" stroke-width="1.12"/><line x1="441.6" y1="255.2" x2="444.8" y2="267.7" stroke="#606060" stroke-width="3.2"/><line x1="444.8" y1="267.7" x2="448.0" y2="280.2" stroke="#606060" stroke-width="3.2"/><line x1="442.0" y1="255.1" x2="445.2" y2="267.6" stroke="#8e8e8e" stroke-width="1.12"/><line x1="445.2" y1="267.6" x2="448.4" y2="280.1" stroke="#8e8e8e" stroke-width="1.12"/><line x1="448.0" y1="280.2" x2="441.8" y2="289.2" stroke="#606060" stroke-width="3.2"/><line x1="441.8" y1="289.2" x2="435.6" y2="298.3" stroke="#606060" stroke-width="3.2"/><line x1="448.3" y1="280.4" x2="442.1" y2="289.5" stroke="#8e8e8e" stroke-width="1.12"/><line x1="442.1" y1="289.5" x2="435.9" y2="298.5" stroke="#8e8e8e" stroke-width="1.12"/><line x1="435.6" y1="298.3" x2="423.4" y2="299.6" stroke="#606060" stroke-width="3.2"/><line x1="423.4" y1="299.6" x2="411.2" y2="301.0" stroke="#1a40f0" stroke-width="3.2"/><line x1="435.6" y1="298.7" x2="423.4" y2="300.0" stroke="#8e8e8e" stroke-width="1.12"/><line x1="423.4" y1="300.0" x2="411.2" y2="301.4" stroke="#5070ff" stroke-width="1.12"/><line x1="411.2" y1="301.0" x2="407.0" y2="310.8" stroke="#1a40f0" stroke-width="3.2"/><line x1="407.0" y1="310.8" x2="402.8" y2="320.5" stroke="#606060" stroke-width="3.2"/><line x1="411.6" y1="301.2" x2="407.4" y2="310.9" stroke="#5070ff" stroke-width="1.12"/><line x1="407.4" y1="310.9" x2="403.2" y2="320.7" stroke="#8e8e8e" stroke-width="1.12"/><line x1="403.6" y1="318.9" x2="413.7" y2="323.5" stroke="#606060" stroke-width="2.0"/><line x1="413.7" y1="323.5" x2="423.8" y2="328.2" stroke="#1a40f0" stroke-width="2.0"/><line x1="403.7" y1="318.6" x2="413.8" y2="323.3" stroke="#8e8e8e" stroke-width="0.70"/><line x1="413.8" y1="323.3" x2="423.9" y2="327.9" stroke="#5070ff" stroke-width="0.70"/><line x1="402.0" y1="322.1" x2="412.1" y2="326.8" stroke="#606060" stroke-width="2.0"/><line x1="412.1" y1="326.8" x2="422.2" y2="331.4" stroke="#1a40f0" stroke-width="2.0"/><line x1="402.1" y1="321.9" x2="412.2" y2="326.6" stroke="#8e8e8e" stroke-width="0.70"/><line x1="412.2" y1="326.6" x2="422.3" y2="331.2" stroke="#5070ff" stroke-width="0.70"/><line x1="423.0" y1="329.8" x2="432.7" y2="323.1" stroke="#1a40f0" stroke-width="3.2"/><line x1="432.7" y1="323.1" x2="442.4" y2="316.3" stroke="#606060" stroke-width="3.2"/><line x1="422.8" y1="329.5" x2="432.5" y2="322.7" stroke="#5070ff" stroke-width="1.12"/><line x1="432.5" y1="322.7" x2="442.2" y2="316.0" stroke="#8e8e8e" stroke-width="1.12"/><line x1="440.7" y1="316.9" x2="437.3" y2="307.9" stroke="#606060" stroke-width="2.0"/><line x1="437.3" y1="307.9" x2="433.9" y2="298.9" stroke="#606060" stroke-width="2.0"/><line x1="440.5" y1="317.0" x2="437.1" y2="308.0" stroke="#8e8e8e" stroke-width="0.70"/><line x1="437.1" y1="308.0" x2="433.7" y2="299.0" stroke="#8e8e8e" stroke-width="0.70"/><line x1="444.1" y1="315.7" x2="440.7" y2="306.7" stroke="#606060" stroke-width="2.0"/><line x1="440.7" y1="306.7" x2="437.3" y2="297.7" stroke="#606060" stroke-width="2.0"/><line x1="443.9" y1="315.7" x2="440.5" y2="306.7" stroke="#8e8e8e" stroke-width="0.70"/><line x1="440.5" y1="306.7" x2="437.1" y2="297.7" stroke="#8e8e8e" stroke-width="0.70"/><circle cx="427.3" cy="254.4" r="5.6" fill="url(#gH)"/><circle cx="543.5" cy="144" r="6.3" fill="url(#gH)"/><circle cx="478.5" cy="203" r="6.3" fill="url(#gH)"/><circle cx="513" cy="245" r="9.5" fill="url(#gC)"/><circle cx="535.6" cy="234.6" r="9" fill="url(#gO)"/><circle cx="477" cy="247.4" r="8.5" fill="url(#gN)"/><circle cx="441.6" cy="255.2" r="8.8" fill="url(#gC)"/><circle cx="448" cy="280.2" r="8.7" fill="url(#gC)"/><circle cx="435.6" cy="298.3" r="9" fill="url(#gC)"/><circle cx="411.2" cy="301" r="8.8" fill="url(#gN)"/><circle cx="442.4" cy="316.3" r="9.2" fill="url(#gC)"/><circle cx="402.8" cy="320.5" r="9.2" fill="url(#gC)"/><circle cx="405.6" cy="270.8" r="7.7" fill="url(#gO)"/><circle cx="503.5" cy="266.4" r="9" fill="url(#gO)"/><circle cx="468" cy="257.8" r="6" fill="url(#gH)"/><circle cx="423" cy="329.8" r="9" fill="url(#gN)"/><text x="405" y="312.7" font-size="10.4" font-weight="bold" fill="#ff2a10" stroke="#0a5a5a" stroke-width="1.2" paint-order="stroke" font-family="Liberation Sans"><tspan font-size="8" dy="-0.6">*</tspan><tspan dy="0.6" dx="-0.3">1</tspan></text><text x="431" y="309.2" font-size="10.4" font-weight="bold" fill="#22dd22" stroke="#6a1a7a" stroke-width="1.2" paint-order="stroke" font-family="Liberation Sans"><tspan font-size="8" dy="-0.6">*</tspan><tspan dy="0.6" dx="-0.3">2</tspan></text><text x="444.2" y="290.6" font-size="10.4" font-weight="bold" fill="#1a44ff" stroke="#6a6410" stroke-width="1.2" paint-order="stroke" font-family="Liberation Sans"><tspan font-size="8" dy="-0.6">*</tspan><tspan dy="0.6" dx="-0.3">3</tspan></text><text x="436.8" y="264" font-size="10.4" font-weight="bold" fill="#00e0f0" stroke="#6a1010" stroke-width="1.2" paint-order="stroke" font-family="Liberation Sans"><tspan font-size="8" dy="-0.6">*</tspan><tspan dy="0.6" dx="-0.3">4</tspan></text><path d="M 423.4 301 Q 424.2 295.5 429 292.8" stroke="#158a15" stroke-width="1.5" fill="none"/><line x1="264.8" y1="414" x2="255.2" y2="399" stroke="#12c412" stroke-width="2.4"/><polygon points="251.6,393.6 259.6,398.4 253.2,402.2" fill="#12c412"/><line x1="265.5" y1="414.5" x2="277.6" y2="404.4" stroke="#d81a10" stroke-width="2.4"/><polygon points="283.6,399.6 274.6,401.4 279.6,407.2" fill="#e82010"/><circle cx="265" cy="415.8" r="3.4" fill="#1028ee"/><text x="290.5" y="403" font-size="9.2" font-weight="normal" fill="#e8e8e8" stroke="#e8e8e8" stroke-width="0.45" font-family="Liberation Sans">Dihedral:</text><text x="290.5" y="418" font-size="9.2" font-weight="normal" fill="#f0f0f0" stroke="#f0f0f0" stroke-width="0.45" font-family="Liberation Sans">Angle:</text><text x="290.5" y="432.5" font-size="9.2" font-weight="normal" fill="#e0e0e0" stroke="#e0e0e0" stroke-width="0.45" font-family="Liberation Sans">Distance(s):</text><text x="370" y="403" font-size="9.2" font-weight="normal" fill="#9a9a9a" stroke="#9a9a9a" stroke-width="0.45" font-family="Liberation Sans">65.9°</text><text x="370" y="418" font-size="9.2" font-weight="normal" fill="#e8e8e8" stroke="#e8e8e8" stroke-width="0.45" font-family="Liberation Sans">122.4°</text><text x="371" y="432.5" font-size="9.2" font-weight="normal" fill="#e8e020" stroke="#e8e020" stroke-width="0.45" font-family="Liberation Sans">1.376 Å</text><text x="414" y="432.5" font-size="9.2" font-weight="normal" fill="#20d8e8" stroke="#20d8e8" stroke-width="0.45" font-family="Liberation Sans">1.491 Å</text><text x="458.5" y="432.5" font-size="9.2" font-weight="normal" fill="#f0f0f0" stroke="#f0f0f0" stroke-width="0.45" font-family="Liberation Sans">1.542 Å</text><rect x="279.5" y="406.3" width="125.5" height="16.5" rx="8.25" ry="8.25" fill="none" stroke="#ff0a0a" stroke-width="5"/></svg></div>
<div id="bbar" class="abs"></div>
<div id="msg" class="abs">Messages</div>
<svg class="abs" style="left:713px;top:465px" width="10" height="10"><polygon points="10,7.5 10,10 7.5,10" fill="#444"/><polygon points="10,6 10,7.5 7.5,10 6,10" fill="#999" opacity="0.5"/></svg>
<div class="abs" style="left:474px;top:445.5px;width:3.5px;height:3px;border-top:1.2px solid #555;border-left:1px solid #777;border-radius:2px 0 0 0;transform:rotate(20deg)"></div>
</body></html>
